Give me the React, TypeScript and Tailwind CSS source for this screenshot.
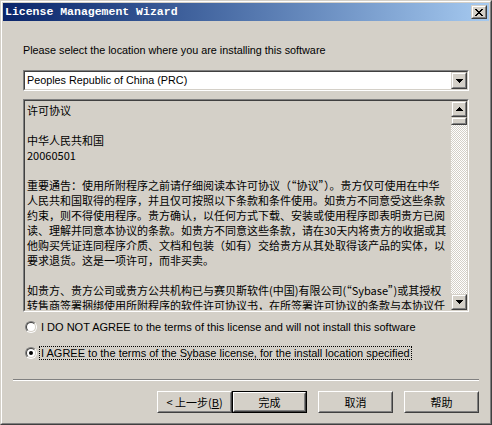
import React from 'react';

const UI = "font-['Liberation_Sans','Noto_Sans_CJK_SC',sans-serif]";
const CJK = "font-['Noto_Sans_CJK_SC',sans-serif]";

const licenseLines = [
  '许可协议',
  '',
  '中华人民共和国',
  '20060501',
  '',
  '重要通告：使用所附程序之前请仔细阅读本许可协议（“协议”）。贵方仅可使用在中华',
  '人民共和国取得的程序，并且仅可按照以下条款和条件使用。如贵方不同意受这些条款',
  '约束，则不得使用程序。贵方确认，以任何方式下载、安装或使用程序即表明贵方已阅',
  '读、理解并同意本协议的条款。如贵方不同意这些条款，请在30天内将贵方的收据或其',
  '他购买凭证连同程序介质、文档和包装（如有）交给贵方从其处取得该产品的实体，以',
  '要求退货。这是一项许可，而非买卖。',
  '',
  '如贵方、贵方公司或贵方公共机构已与赛贝斯软件(中国)有限公司(“Sybase”)或其授权',
  '转售商签署捆绑使用所附程序的软件许可协议书，在所签署许可协议的条款与本协议任',
];

// little black triangle, pixel style
function Tri({ up = false }: { up?: boolean }) {
  return (
    <svg width="7" height="4" viewBox="0 0 7 4" shapeRendering="crispEdges" className={up ? 'rotate-180' : ''}>
      <path d="M0 0h7v1h-1v1h-1v1h-1v1h-1v-1h-1v-1h-1v-1h-1z" fill="#000" />
    </svg>
  );
}

function CloseGlyph() {
  const on = [
    [0, 1, 6, 7],
    [1, 2, 5, 6],
    [2, 3, 4, 5],
    [3, 4],
    [2, 3, 4, 5],
    [1, 2, 5, 6],
    [0, 1, 6, 7],
  ];
  return (
    <svg width="8" height="7" viewBox="0 0 8 7" shapeRendering="crispEdges">
      {on.map((row, y) => row.map(x => <rect key={`${x}-${y}`} x={x} y={y} width="1" height="1" fill="#000" />))}
    </svg>
  );
}

function Raised({ className = '', children }: { className?: string; children?: React.ReactNode }) {
  return (
    <div className={`border border-t-[#d4d0c8] border-l-[#d4d0c8] border-r-[#404040] border-b-[#404040] ${className}`}>
      <div className="w-full h-full border border-t-white border-l-white border-r-[#808080] border-b-[#808080] bg-[#d4d0c8] flex items-center justify-center">
        {children}
      </div>
    </div>
  );
}

function Sunken({ className = '', innerClass = '', children }: { className?: string; innerClass?: string; children?: React.ReactNode }) {
  return (
    <div className={`border border-t-[#808080] border-l-[#808080] border-r-white border-b-white ${className}`}>
      <div className={`w-full h-full border border-t-[#404040] border-l-[#404040] border-r-[#d4d0c8] border-b-[#d4d0c8] ${innerClass}`}>
        {children}
      </div>
    </div>
  );
}

function Button({ label, isDefault = false }: { label: React.ReactNode; isDefault?: boolean }) {
  const face = (
    <div className="w-full h-full border border-t-white border-l-white border-r-[#404040] border-b-[#404040]">
      <div className={`w-full h-full border border-t-[#d4d0c8] border-l-[#d4d0c8] border-r-[#808080] border-b-[#808080] flex items-center justify-center text-[11px] text-black ${CJK}`}>
        {label}
      </div>
    </div>
  );
  if (isDefault) {
    return <div className="w-[75px] h-[22px] border border-black">{face}</div>;
  }
  return <div className="w-[75px] h-[22px]">{face}</div>;
}

function Radio({ checked = false }: { checked?: boolean }) {
  return (
    <div className="w-[12px] h-[12px] rounded-full border border-t-[#808080] border-l-[#808080] border-r-white border-b-white">
      <div className="w-full h-full rounded-full border border-t-[#404040] border-l-[#404040] border-r-[#d4d0c8] border-b-[#d4d0c8] bg-white flex items-center justify-center">
        {checked && <div className="w-[4px] h-[4px] rounded-full bg-black" />}
      </div>
    </div>
  );
}

export default function App() {
  return (
    <div className={`w-[492px] h-[425px] bg-[#d4d0c8] border border-t-[#d4d0c8] border-l-[#d4d0c8] border-r-[#404040] border-b-[#404040] ${UI}`}>
      <div className="w-full h-full border border-t-white border-l-white border-r-[#808080] border-b-[#808080] p-px flex flex-col">
        {/* title bar */}
        <div className="h-[18px] bg-linear-to-r from-[#0a246a] to-[#a6caf0] flex items-center justify-between pl-[2px] pr-[2px]">
          <span className="text-white font-bold text-[11.5px] leading-none font-['Liberation_Mono',monospace]">
            License Management Wizard
          </span>
          <Raised className="w-[16px] h-[14px]">
            <CloseGlyph />
          </Raised>
        </div>

        <div className="px-[20px] flex flex-col">
          <p className="pt-[22px] text-[10.8px] leading-[14px] text-black">
            Please select the location where you are installing this software
          </p>

          {/* location combo */}
          <Sunken className="mt-[13px] h-[21px]" innerClass="bg-white flex items-center justify-between">
            <span className="pl-[2px] text-[10.8px] text-black">Peoples Republic of China (PRC)</span>
            <Raised className="w-[16px] h-[17px]">
              <Tri />
            </Raised>
          </Sunken>

          {/* license text */}
          <Sunken className="mt-[8px] h-[213px]" innerClass="flex overflow-hidden">
            <div className={`flex-1 pl-[2px] pt-[2px] overflow-hidden text-[11px] leading-[15px] text-black whitespace-pre ${CJK}`}>
              {licenseLines.map((l, i) => (
                <div key={i} className="h-[15px]">{l}</div>
              ))}
            </div>
            <div className="w-[16px] flex flex-col">
              <Raised className="h-[16px]">
                <Tri up />
              </Raised>
              <Raised className="h-[8px]" />
              <div className="flex-1 bg-[repeating-conic-gradient(#ffffff_0%_25%,#d4d0c8_0%_50%)] bg-[length:2px_2px]" />
              <Raised className="h-[16px]">
                <Tri />
              </Raised>
            </div>
          </Sunken>

          {/* agreement radios */}
          <div className="mt-[7px] h-[16px] pl-[2px] flex items-center gap-[4px] text-[11px] text-black">
            <Radio />
            <span>I DO NOT AGREE to the terms of this license and will not install this software</span>
          </div>
          <div className="mt-[10px] h-[16px] pl-[2px] flex items-center gap-[2px] text-[11px] text-black">
            <Radio checked />
            <span className="border border-dotted border-black px-px leading-[12px]">
              I AGREE to the terms of the Sybase license, for the install location specified
            </span>
          </div>
        </div>

        <div className="px-[10px] mt-[18px]">
          <div className="h-[2px] border-t border-t-[#808080] border-b border-b-white" />
          <div className="mt-[10px] flex justify-end">
            <Button label={<span>&lt; 上一步(<u>B</u>)</span>} />
            <Button label="完成" isDefault />
            <div className="ml-[11px]">
              <Button label="取消" />
            </div>
            <div className="ml-[11px]">
              <Button label="帮助" />
            </div>
          </div>
        </div>
      </div>
    </div>
  );
}
